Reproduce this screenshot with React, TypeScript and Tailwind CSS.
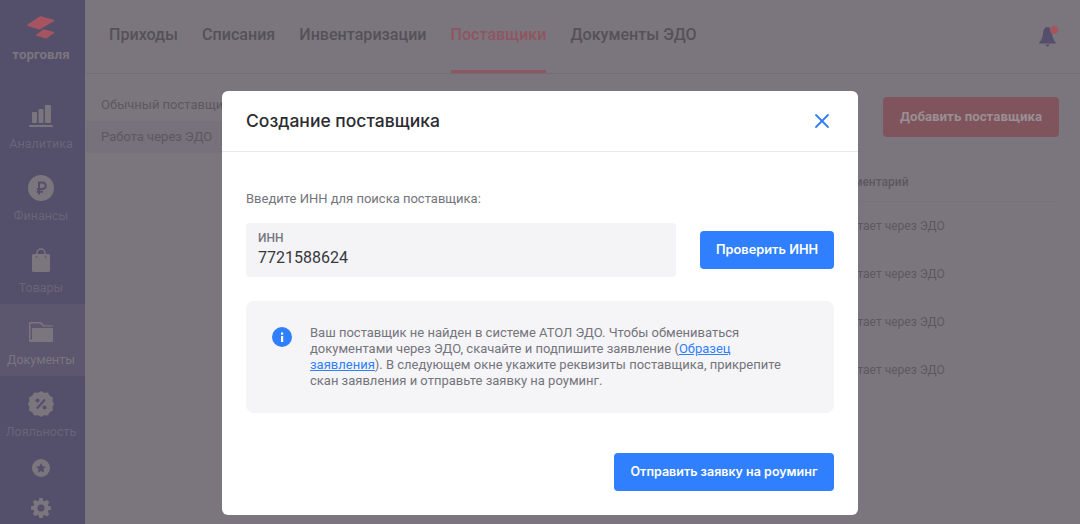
import { X } from "lucide-react";

const tabs = ["Приходы", "Списания", "Инвентаризации", "Поставщики", "Документы ЭДО"];

const Logo = () => (
  <svg width="28" height="23" viewBox="0 0 28 23" fill="#a65560" stroke="#a65560" strokeWidth="1.500" strokeLinejoin="round">
    <path d="M13.500 1 26.500 4.500 12.500 12.700 1 9.200z" />
    <path d="M16.800 14 26.500 16.600 19 21.800 9.800 19z" />
  </svg>
);

const BarsIcon = () => (
  <svg width="24" height="22" viewBox="0 0 24 22" fill="#7b767d">
    <rect x="3" y="7" width="5" height="11" rx="1" />
    <rect x="9.500" y="4" width="5" height="14" rx="1" />
    <rect x="16" y="0" width="6" height="18" rx="1" />
    <rect x="0" y="20" width="24" height="2" rx="1" />
  </svg>
);

const RubleIcon = () => (
  <svg width="26" height="26" viewBox="0 0 26 26">
    <circle cx="13" cy="13" r="13" fill="#7b767d" />
    <path d="M11 19.500V7.500h3.500a3.200 3.200 0 0 1 0 6.500H8.800M8.800 16.700h6" fill="none" stroke="#544f6b" strokeWidth="2" />
  </svg>
);

const BagIcon = () => (
  <svg width="18" height="24" viewBox="0 0 18 24">
    <path d="M5 7V5a4 4 0 0 1 8 0v2" fill="none" stroke="#7b767d" strokeWidth="1.500" />
    <rect x="0" y="6" width="18" height="18" rx="1.500" fill="#7b767d" />
    <circle cx="4.500" cy="9" r="0.800" fill="#544f6b" />
    <circle cx="13.500" cy="9" r="0.800" fill="#544f6b" />
  </svg>
);

const FolderIcon = () => (
  <svg width="24" height="20" viewBox="0 0 24 20" fill="#7b767d">
    <path d="M0 1a1 1 0 0 1 1-1h11l3 3.200h9v1.300H14L11 1.500H1.500V18H0z" />
    <path d="M3 6h21v13a1 1 0 0 1-1 1H1a1 1 0 0 1-1-1v-1.500h3z" />
  </svg>
);

const PercentIcon = () => (
  <svg width="26" height="26" viewBox="0 0 26 26">
    <path
      d="M13 0l3.200 1.800 3.700-.3 1.800 3.200 3.200 1.800-.3 3.700L26 13l-1.400 2.800.3 3.700-3.200 1.800-1.800 3.200-3.700-.3L13 26l-3.200-1.800-3.700.3-1.800-3.200-3.200-1.800.3-3.700L0 13l1.400-2.800-.3-3.700 3.200-1.800 1.800-3.200 3.700.3z"
      fill="#7b767d"
    />
    <circle cx="9.500" cy="9.500" r="2" fill="#544f6b" />
    <circle cx="16.500" cy="16.500" r="2" fill="#544f6b" />
    <path d="M17 8.500 9 17.500" stroke="#544f6b" strokeWidth="2" />
  </svg>
);

const StarIcon = () => (
  <svg width="18" height="18" viewBox="0 0 18 18">
    <circle cx="9" cy="9" r="9" fill="#7b767d" />
    <path d="m9 4 1.500 3.300 3.500.4-2.600 2.400.7 3.500L9 11.900l-3.100 1.700.7-3.500L4 7.700l3.500-.4z" fill="#544f6b" />
  </svg>
);

const GearIcon = () => (
  <svg width="20" height="20" viewBox="0 0 20 20">
    <path
      d="M8.300 0h3.400l.5 2.700 1.500.6L16 1.800l2.300 2.400-1.500 2.200.6 1.500 2.600.5v3.400l-2.600.5-.6 1.500 1.500 2.200-2.300 2.400-2.300-1.500-1.500.6-.5 2.700H8.300l-.5-2.700-1.500-.6L4 18.200l-2.300-2.400 1.500-2.200-.6-1.500-2.600-.5V8.200l2.600-.5.6-1.500-1.500-2.200L4 1.800l2.300 1.500 1.500-.6z"
      fill="#7b767d"
    />
    <circle cx="10" cy="10" r="3.500" fill="#544f6b" />
  </svg>
);

const BellIcon = () => (
  <svg width="17" height="20" viewBox="0 0 17 20" fill="#544f6b">
    <path d="M8.500 0C5.300 0 4.500 3 4 7 3.500 11 2 13.500.3 15.500c-.3.500 0 1 .5 1h15.400c.5 0 .8-.5.500-1C15 13.500 13.500 11 13 7 12.500 3 11.700 0 8.500 0z" />
    <path d="M6.500 17.500h4a2 2 0 0 1-4 0z" />
  </svg>
);

const navItems = [
  { label: "Аналитика", icon: <BarsIcon />, pad: "pb-[8px]" },
  { label: "Финансы", icon: <RubleIcon />, pad: "pb-[6px]" },
  { label: "Товары", icon: <BagIcon />, pad: "pb-[7px]" },
  { label: "Документы", icon: <FolderIcon />, pad: "pb-[9px]", active: true },
  { label: "Лояльность", icon: <PercentIcon />, pad: "pb-[6px]" },
];

const Sidebar = () => (
  <aside className="flex h-full w-[85px] shrink-0 flex-col items-center overflow-hidden bg-[#544f6b]">
    <div className="flex h-[88px] w-full shrink-0 flex-col items-center pr-[3px] pt-[16px]">
      <Logo />
      <span className="mt-[8px] text-[13.400px] leading-[16px] font-bold text-[#7b767d]">торговля</span>
    </div>
    {navItems.map((item) => (
      <div
        key={item.label}
        className={`flex h-[72px] w-full shrink-0 flex-col items-center pr-[3px] ${item.active ? "bg-[#5c566f]" : ""}`}
      >
        <div className={`flex h-[47px] items-end ${item.pad}`}>{item.icon}</div>
        <span className={`text-[12.500px] leading-[18px] ${item.active ? "text-[#7b767d]" : "text-[#6a6577]"}`}>
          {item.label}
        </span>
      </div>
    ))}
    <div className="mr-[3px] mt-[11px] shrink-0">
      <StarIcon />
    </div>
    <div className="mr-[3px] mt-[21px] shrink-0">
      <GearIcon />
    </div>
  </aside>
);

const Header = () => (
  <header className="flex h-[74px] shrink-0 items-start justify-between border-b border-[#736e75] pl-[24px] pr-[24px]">
    <nav className="flex gap-[24px]">
      {tabs.map((t) => (
        <div
          key={t}
          className={`h-[73px] pt-[24px] text-[16.100px] leading-[22px] font-medium ${
            t === "Поставщики" ? "border-b-[3px] border-[#8f5560] text-[#8f5560]" : "text-[#55515a]"
          }`}
        >
          {t}
        </div>
      ))}
    </nav>
    <div className="relative mt-[27px]">
      <BellIcon />
      <span className="absolute -right-[2px] -top-[1px] h-[8px] w-[8px] rounded-full bg-[#a65560]" />
    </div>
  </header>
);

const Content = () => (
  <div className="flex min-h-0 flex-1">
    <div className="w-[240px] shrink-0 pt-[15px] text-[13px] text-[#5c5860]">
      <div className="flex h-[32px] items-center pl-[16px]">Обычный поставщик</div>
      <div className="flex h-[32px] items-center bg-[#76717a] pl-[16px]">Работа через ЭДО</div>
    </div>
    <div className="flex-1 pr-[21px] pt-[23px]">
      <div className="flex justify-end">
        <div className="flex h-[40px] w-[176px] items-center justify-center rounded-[4px] bg-[#7f545c] text-[13.300px] font-bold text-[#9a8f94]">
          Добавить поставщика
        </div>
      </div>
      <div className="ml-[505px] border-b border-[#76717a] pb-[10px] pt-[36px] text-[12px] leading-[18px] font-medium text-[#5c5860]">
        Комментарий
      </div>
      {[0, 1, 2, 3].map((i) => (
        <div key={i} className="ml-[505px] h-[48px] pt-[15px] text-[12px] leading-[18px] text-[#5c5860]">
          Работает через ЭДО
        </div>
      ))}
    </div>
  </div>
);

const Modal = () => (
  <div className="absolute inset-0 flex items-start justify-center pt-[91px]">
    <div className="w-[636px] rounded-[6px] bg-white">
      <div className="flex h-[61px] items-center justify-between border-b border-[#e8e8ea] px-[24px]">
        <h2 className="font-['Inter',sans-serif] text-[17.500px] font-medium text-[#2b2b30]">Создание поставщика</h2>
        <X size={24} strokeWidth={1.800} className="text-[#2f7fff]" />
      </div>
      <div className="px-[24px] pb-[24px] pt-[39px]">
        <p className="text-[13px] leading-[16px] text-[#74747c]">Введите ИНН для поиска поставщика:</p>
        <div className="mt-[16px] flex items-center gap-[24px]">
          <div className="h-[54px] flex-1 rounded-[4px] bg-[#f4f4f6] px-[12px] pt-[7px]">
            <div className="text-[12px] leading-[16px] font-medium text-[#77777f]">ИНН</div>
            <div className="mt-[2px] text-[16px] leading-[20px] text-[#38383e]">7721588624</div>
          </div>
          <div className="flex h-[38px] w-[134px] items-center justify-center rounded-[4px] bg-[#2f7fff] font-['Inter',sans-serif] text-[12.800px] font-semibold text-white">
            Проверить ИНН
          </div>
        </div>
        <div className="mt-[24px] flex h-[112px] items-start gap-[18px] rounded-[8px] bg-[#f5f5f7] pl-[26px] pr-[40px] pt-[24px]">
          <svg width="20" height="20" viewBox="0 0 20 20" className="mt-[2px] shrink-0">
            <circle cx="10" cy="10" r="10" fill="#2f7fff" />
            <rect x="9" y="9" width="2.200" height="6" fill="#fff" />
            <rect x="9" y="5.500" width="2.200" height="2.200" fill="#fff" />
          </svg>
          <p className="text-[13px] leading-[16px] text-[#74747c]">
            Ваш поставщик не найден в системе АТОЛ ЭДО. Чтобы обмениваться документами через ЭДО, скачайте и подпишите
            заявление (<span className="text-[#2f7fff] underline">Образец заявления</span>). В следующем окне укажите
            реквизиты поставщика, прикрепите скан заявления и отправьте заявку на роуминг.
          </p>
        </div>
        <div className="mt-[40px] flex justify-end">
          <div className="flex h-[38px] w-[220px] items-center justify-center rounded-[4px] bg-[#2f7fff] font-['Inter',sans-serif] text-[12.500px] font-semibold text-white">
            Отправить заявку на роуминг
          </div>
        </div>
      </div>
    </div>
  </div>
);

export default function App() {
  return (
    <div className="relative flex h-[524px] w-[1080px] overflow-hidden bg-[#7b767d] font-['Roboto',sans-serif]">
      <Sidebar />
      <main className="flex min-w-0 flex-1 flex-col">
        <Header />
        <Content />
      </main>
      <Modal />
    </div>
  );
}
